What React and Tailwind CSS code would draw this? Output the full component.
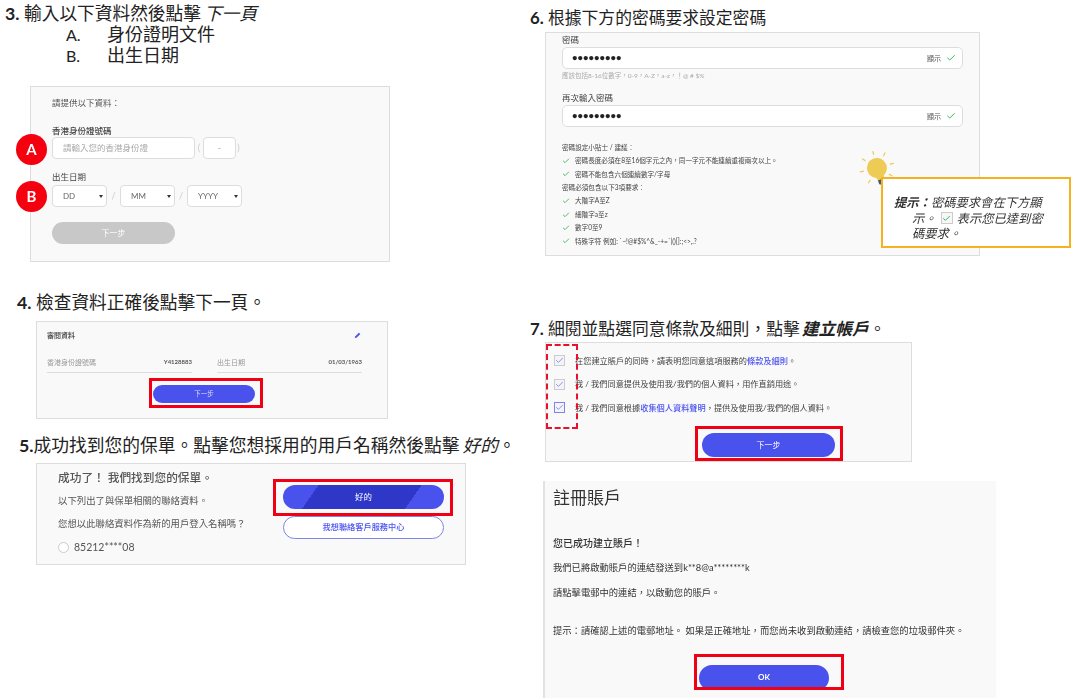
import React from "react";
import { Check } from "lucide-react";

const font = { fontFamily: '"Lato", "Noto Sans CJK TC", sans-serif' };

function Heading({ num, className, children }) {
  return (
    <div className={"leading-[21px] text-[#222] whitespace-nowrap " + className}>
      <span className="font-bold">{num}</span>
      {children}
    </div>
  );
}

function Field({ className, children }) {
  return (
    <div className={"flex items-center bg-white border border-[#ddd] rounded-[4px] " + className}>
      {children}
    </div>
  );
}

function SelectBox({ label, className }) {
  return (
    <Field className={"h-[22px] justify-between pl-[10px] pr-[3px] text-[8px] text-[#666] " + className}>
      <span>{label}</span>
      <span className="w-0 h-0 border-x-[2.5px] border-x-transparent border-t-[3px] border-t-[#333]"></span>
    </Field>
  );
}

function Marker({ letter, className }) {
  return (
    <div className={"absolute left-[-15px] w-[31px] h-[31px] rounded-full bg-[#f5000f] flex items-center justify-center text-white font-bold text-[15px] " + className}>
      {letter}
    </div>
  );
}

function TickRow({ children }) {
  return (
    <div className="flex items-center gap-[5px] h-[13.4px] text-[6.6px] text-[#444]">
      <Check size={8} className="text-[#22b14c]" strokeWidth={2.4} />
      <span>{children}</span>
    </div>
  );
}

function PasswordField() {
  return (
    <div className="flex items-center justify-between h-[22px] bg-white border border-[#ddd] rounded-[5px] pl-[9px] pr-[6px]">
      <span className="text-[9.5px] font-bold text-[#222]">•••••••••</span>
      <span className="flex items-center gap-[5px] text-[7px] text-[#555]">
        顯示
        <Check size={10} className="text-[#22b14c]" strokeWidth={2.2} />
      </span>
    </div>
  );
}

function AgreeRow({ active, children }) {
  return (
    <div className="flex items-center h-[23.5px]">
      <span className={"w-[11px] h-[11px] flex items-center justify-center border bg-[#f3f3f8] " + (active ? "border-[#7d84ea]" : "border-[#ccc]")}>
        <Check size={9} className="text-[#6a72ee]" strokeWidth={2} />
      </span>
      <span className="ml-[10px] text-[8.2px] text-[#444] whitespace-nowrap">{children}</span>
    </div>
  );
}

function Bulb() {
  return (
    <svg width="40" height="46" viewBox="0 0 40 46" className="absolute left-[311px] top-[116px]">
      <g stroke="#efc94c" strokeWidth="1.2" strokeLinecap="round">
        <line x1="16.6" y1="5.4" x2="15.9" y2="2.5" />
        <line x1="26.6" y1="6.7" x2="28" y2="4" />
        <line x1="33.4" y1="15.2" x2="36.3" y2="14.4" />
        <line x1="8.1" y1="11.6" x2="5.5" y2="10" />
        <line x1="6.4" y1="22.2" x2="3.5" y2="22.9" />
        <line x1="13" y1="31.2" x2="11.5" y2="33.8" />
        <line x1="32.3" y1="25.4" x2="35" y2="26.8" />
      </g>
      <g transform="rotate(-20 20 19)">
        <circle cx="20" cy="19" r="10" fill="#eecb55" />
        <path d="M16 27h8l-.6 5h-6.8z" fill="#eecb55" />
        <path d="M16.6 31h6.8v4q-3.4 3-6.8 0z" fill="#4c5672" />
      </g>
    </svg>
  );
}

export default function App() {
  return (
    <div style={font} className="flex w-[1080px] h-[698px] overflow-hidden bg-white">
      {/* left column */}
      <div className="w-[525px] shrink-0 pt-[3px]">
        <Heading num="3." className="ml-[5px] text-[17.7px]">
          {" "}輸入以下資料然後點擊<i className="ml-[3px]">下一頁</i>
        </Heading>
        <div className="ml-[66px] text-[18px] leading-[21px] text-[#222]">
          <div className="flex"><span className="w-[41px] text-[16px]">A.</span>身份證明文件</div>
          <div className="flex"><span className="w-[41px] text-[16px]">B.</span>出生日期</div>
        </div>

        <div className="relative ml-[30px] mt-[20px] w-[360px] h-[176px] bg-[#f9f9f9] border border-[#ddd] pl-[21px] pt-[10px] blur-[0.3px]">
          <div className="text-[8.5px] leading-[12px] text-[#555]">請提供以下資料：</div>
          <div className="mt-[16px] text-[8.5px] leading-[12px] font-medium text-[#444]">香港身份證號碼</div>
          <div className="flex items-center text-[#ccc] text-[9px]">
            <Field className="w-[143px] h-[22px] pl-[10px] text-[8.5px] text-[#aaa]">請輸入您的香港身份證</Field>
            <span className="w-[8px] text-center">(</span>
            <Field className="w-[33px] h-[22px] justify-center text-[#aaa]">-</Field>
            <span className="w-[5px] text-center">)</span>
          </div>
          <div className="mt-[12px] text-[8.5px] leading-[12px] text-[#444]">出生日期</div>
          <div className="flex items-center mt-[2px] text-[#ccc] text-[9px]">
            <SelectBox label="DD" className="w-[55px]" />
            <span className="w-[13px] text-center">/</span>
            <SelectBox label="MM" className="w-[55px]" />
            <span className="w-[12px] text-center">/</span>
            <SelectBox label="YYYY" className="w-[55px]" />
          </div>
          <div className="w-[123px] h-[22px] mt-[15px] rounded-full bg-[#c8c8c8] flex items-center justify-center text-[8px] text-white">下一步</div>
          <Marker letter="A" className="top-[47px]" />
          <Marker letter="B" className="top-[94px]" />
        </div>

        <Heading num="4." className="ml-[17px] mt-[30px] text-[17.7px]">
          {" "}檢查資料正確後點擊下一頁。
        </Heading>
        <div className="ml-[36px] mt-[8px] w-[352px] h-[98px] bg-[#f9f9f9] border border-[#ddd] pl-[10px] pr-[25px] pt-[8px] blur-[0.3px]">
          <div className="flex items-center justify-between text-[7px] leading-[10px] font-medium text-[#444]">
            <span>審閱資料</span>
            <svg width="7" height="7" viewBox="0 0 10 10" className="mr-[1px]">
              <path d="M1 9l1-3 5-5 2 2-5 5z" fill="#4a52ee" />
            </svg>
          </div>
          <div className="flex justify-between mt-[17px] text-[6px] text-[#999]">
            <div className="w-[145px] h-[16px] flex justify-between border-b border-[#ddd]">
              <span className="text-[7px]">香港身份證號碼</span>
              <span className="font-bold text-[#555]">Y4128883</span>
            </div>
            <div className="w-[145px] h-[16px] flex justify-between border-b border-[#ddd]">
              <span className="text-[7px]">出生日期</span>
              <span className="font-bold text-[#555]">01/03/1963</span>
            </div>
          </div>
          <div className="ml-[102px] mt-[5px] w-[114px] h-[30px] border-[3.5px] border-[#f00014] pl-[1px] pt-[4px]">
            <div className="w-[102px] h-[18px] rounded-full bg-[#4a52ee] flex items-center justify-center text-[6.5px] text-[#dde]">下一步</div>
          </div>
        </div>

        <Heading num="5." className="ml-[19px] mt-[16px] text-[17.75px]">
          成功找到您的保單。點擊您想採用的用戶名稱然後點擊<i className="ml-[3px]">好的</i>。
        </Heading>
        <div className="flex ml-[36px] mt-[7px] w-[430px] h-[102px] bg-[#f9f9f9] border border-[#ddd] pl-[21px] blur-[0.3px]">
          <div className="w-[215px] shrink-0 pt-[5px] text-[#555]">
            <div className="text-[11.7px] leading-[16px] font-medium">成功了！ 我們找到您的保單。</div>
            <div className="mt-[9px] text-[9.4px] leading-[14px]">以下列出了與保單相關的聯絡資料。</div>
            <div className="mt-[9px] text-[9.4px] leading-[14px] whitespace-nowrap">您想以此聯絡資料作為新的用戶登入名稱嗎？</div>
            <div className="flex items-center mt-[9px] text-[10.5px] leading-[14px]">
              <span className="w-[11px] h-[11px] rounded-full border border-[#ccc] bg-white mr-[5px]"></span>
              85212****08
            </div>
          </div>
          <div className="pt-[15px]">
            <div className="w-[180px] h-[37px] border-[3.5px] border-[#f00014] pl-[7px] pt-[3px]">
              <div className="w-[161px] h-[24px] rounded-full bg-[linear-gradient(125deg,#4a52ee_20%,#2f37c8_20%,#2f37c8_78%,#4a52ee_78%)] flex items-center justify-center text-[8.5px] text-white">好的</div>
            </div>
            <div className="ml-[10px] w-[161px] h-[23px] rounded-full bg-white border border-[#7d84ea] flex items-center justify-center text-[8.2px] font-medium text-[#4a52ee]">我想聯絡客戶服務中心</div>
          </div>
        </div>
      </div>

      {/* right column */}
      <div className="flex-1 pt-[7px]">
        <Heading num="6." className="ml-[5px] text-[16.8px]">
          {" "}根據下方的密碼要求設定密碼
        </Heading>
        <div className="relative ml-[20px] mt-[4px] w-[435px] h-[224px] bg-[#f9f9f9] border border-[#ddd] pl-[16px] pr-[16px]">
          <div className="blur-[0.3px]">
            <div className="text-[8.5px] leading-[14px] text-[#444]">密碼</div>
            <PasswordField />
            <div className="mt-[2px] text-[6.5px] leading-[10px] text-[#aaa]">應該包括8-16位數字，0-9，A-Z，a-z，！@ # $%</div>
            <div className="mt-[11px] text-[8.5px] leading-[12px] text-[#444]">再次輸入密碼</div>
            <div className="mt-[1px]"><PasswordField /></div>
            <div className="mt-[14px] text-[6.6px] leading-[13.4px] text-[#444]">密碼設定小貼士 / 建議：</div>
            <TickRow>密碼長度必須在8至16個字元之內，同一字元不能連續重複兩次以上。</TickRow>
            <TickRow>密碼不能包含六個連續數字/字母</TickRow>
            <div className="text-[6.6px] leading-[13.4px] text-[#444]">密碼必須包含以下3項要求：</div>
            <TickRow>大階字A至Z</TickRow>
            <TickRow>細階字a至z</TickRow>
            <TickRow>數字0至9</TickRow>
            <TickRow>特殊字符 例如: `~!@#$%^&_-+=`|(){}[]:;&lt;&gt;,.?</TickRow>
          </div>
          <Bulb />
          <div className="absolute left-[335px] top-[144px] w-[190px] h-[71px] bg-white border-2 border-[#f5b21e] pt-[16px] pl-[11px] text-[12.3px] leading-[15.5px] italic text-[#333] blur-[0.2px]">
            <div className="whitespace-nowrap"><b>提示：</b>密碼要求會在下方顯</div>
            <div className="flex items-center whitespace-nowrap pl-[18px]">
              示。
              <span className="mx-[4px] w-[12px] h-[12px] flex items-center justify-center border border-[#ccc] bg-[#f7f7f7]">
                <Check size={9} className="text-[#22b14c]" strokeWidth={2.4} />
              </span>
              表示您已達到密
            </div>
            <div className="whitespace-nowrap pl-[18px]">碼要求。</div>
          </div>
        </div>

        <Heading num="7." className="ml-[5px] mt-[62px] text-[16.8px]">
          {" "}細閱並點選同意條款及細則，點擊<b className="ml-[2px]"><i>建立帳戶</i></b>。
        </Heading>
        <div className="relative ml-[20px] mt-[3px] w-[367px] h-[120px] bg-[#f9f9f9] border border-[#ddd] pl-[8px] pt-[6px] blur-[0.3px]">
          <AgreeRow>在您建立賬戶的同時，請表明您同意這項服務的<span className="text-[#4a52ee] font-medium">條款及細則</span>。</AgreeRow>
          <AgreeRow>我 / 我們同意提供及使用我/我們的個人資料，用作直銷用途。</AgreeRow>
          <AgreeRow active>我 / 我們同意根據<span className="text-[#4a52ee] font-medium">收集個人資料聲明</span>，提供及使用我/我們的個人資料。</AgreeRow>
          <div className="ml-[141px] mt-[6.5px] w-[148px] h-[35px] border-[3.5px] border-[#f00014] pl-[4px] pt-[4px]">
            <div className="w-[133px] h-[24px] rounded-full bg-[#4a52ee] flex items-center justify-center text-[8px] text-white">下一步</div>
          </div>
          <div className="absolute left-[0px] top-[1px] w-[32px] h-[85px] border-2 border-dashed border-[#e8102a]"></div>
        </div>

        <div className="ml-[18px] mt-[19px] w-[453px] h-[217px] bg-[#f9f9f9] border-l-2 border-[#e2e2e2] pl-[8px] pt-[5px] text-[#333] blur-[0.3px]">
          <div className="text-[17px] leading-[24px]">註冊賬戶</div>
          <div className="mt-[26px] text-[10px] leading-[14px] font-medium">您已成功建立賬戶！</div>
          <div className="mt-[11px] text-[9.3px] leading-[14px]">我們已將啟動賬戶的連結發送到k**8@a********k</div>
          <div className="mt-[11px] text-[9.3px] leading-[14px]">請點擊電郵中的連結，以啟動您的賬戶。</div>
          <div className="mt-[24px] text-[9.3px] leading-[14px] whitespace-nowrap">提示：請確認上述的電郵地址。 如果是正確地址，而您尚未收到啟動連結，請檢查您的垃圾郵件夾。</div>
          <div className="ml-[141px] mt-[16px] w-[150px] h-[36px] border-[3.5px] border-[#f00014] pl-[2px] pt-[7.5px] overflow-hidden">
            <div className="w-[130px] h-[26px] rounded-full bg-[#4a52ee] flex items-start pt-[7px] justify-center text-[8px] leading-[10px] font-bold text-white">OK</div>
          </div>
        </div>
      </div>
    </div>
  );
}
